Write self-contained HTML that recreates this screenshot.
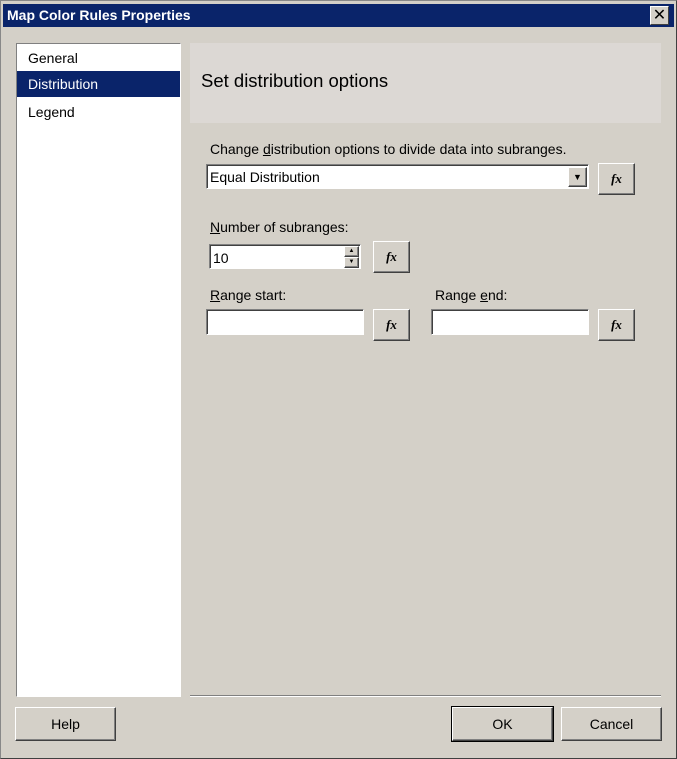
<!DOCTYPE html><html><head><style>
body{margin:0;width:677px;height:759px;background:#d4d0c8;font-family:"Liberation Sans",sans-serif;font-size:14px;position:relative;overflow:hidden}
.a{position:absolute}
.win{left:0;top:0;width:675px;height:757px;border:1px solid #888;border-right-color:#404040;border-bottom-color:#404040}
.title{left:3px;top:4px;width:671px;height:23px;background:#0a246a;color:#fff;font-weight:bold;font-size:14px;line-height:23px;text-indent:4px}
.x{left:647px;top:2px;width:17px;height:17px;background:#d4d0c8;border:1px solid;border-color:#fff #404040 #404040 #fff;color:#000;font-size:16px;line-height:17px;text-align:center;font-weight:normal;text-indent:0}
.list{left:16px;top:43px;width:163px;height:652px;background:#fff;border:1px solid;border-color:#808080 #fff #fff #808080}
.item{left:0;width:163px;height:26px;line-height:26px;text-indent:11px}
.btn{background:#d4d0c8;border:1px solid;border-color:#fff #404040 #404040 #fff;box-shadow:inset -1px -1px #808080;text-align:center}
.inp{background:#fff;border:1px solid;border-color:#808080 #fff #fff #808080;box-shadow:inset 1px 1px #404040}
.fx{font-family:"Liberation Serif",serif;font-style:italic;font-weight:bold;font-size:13px;line-height:30px}
</style></head><body>
<div class="a win"></div>
<div class="a title">Map Color Rules Properties<div class="a x">✕</div></div>
<div class="a list">
<div class="a item" style="top:1px">General</div>
<div class="a item" style="top:27px;background:#0a246a;color:#fff">Distribution</div>
<div class="a item" style="top:55px">Legend</div>
</div>
<div class="a" style="left:190px;top:43px;width:471px;height:80px;background:#dcd8d4"></div>
<div class="a" style="left:201px;top:70px;font-size:18.5px">Set distribution options</div>
<div class="a" style="left:210px;top:141px">Change <u>d</u>istribution options to divide data into subranges.</div>
<div class="a inp" style="left:206px;top:164px;width:381px;height:23px"><span class="a" style="left:3px;top:4px">Equal Distribution</span>
<div class="a btn" style="left:361px;top:2px;width:17px;height:18px;font-size:9px;line-height:18px">▼</div></div>
<div class="a btn fx" style="left:598px;top:163px;width:35px;height:30px">fx</div>
<div class="a" style="left:210px;top:219px"><u>N</u>umber of subranges:</div>
<div class="a inp" style="left:209px;top:244px;width:150px;height:23px"><span class="a" style="left:3px;top:5px">10</span>
<div class="a btn" style="left:134px;top:1px;width:13px;height:9px;font-size:6px;line-height:9px">▲</div>
<div class="a btn" style="left:134px;top:12px;width:13px;height:9px;font-size:6px;line-height:9px">▼</div></div>
<div class="a btn fx" style="left:373px;top:241px;width:35px;height:30px">fx</div>
<div class="a" style="left:210px;top:287px"><u>R</u>ange start:</div>
<div class="a inp" style="left:206px;top:309px;width:156px;height:24px"></div>
<div class="a btn fx" style="left:373px;top:309px;width:35px;height:30px">fx</div>
<div class="a" style="left:435px;top:287px">Range <u>e</u>nd:</div>
<div class="a inp" style="left:431px;top:309px;width:156px;height:24px"></div>
<div class="a btn fx" style="left:598px;top:309px;width:35px;height:30px">fx</div>
<div class="a" style="left:190px;top:695px;width:471px;height:1px;background:#808080;border-bottom:1px solid #fff"></div>
<div class="a btn" style="left:15px;top:707px;width:99px;height:32px;line-height:32px">Help</div>
<div class="a btn" style="left:452px;top:707px;width:99px;height:32px;line-height:32px;outline:1px solid #000">OK</div>
<div class="a btn" style="left:561px;top:707px;width:99px;height:32px;line-height:32px">Cancel</div>
</body></html>
